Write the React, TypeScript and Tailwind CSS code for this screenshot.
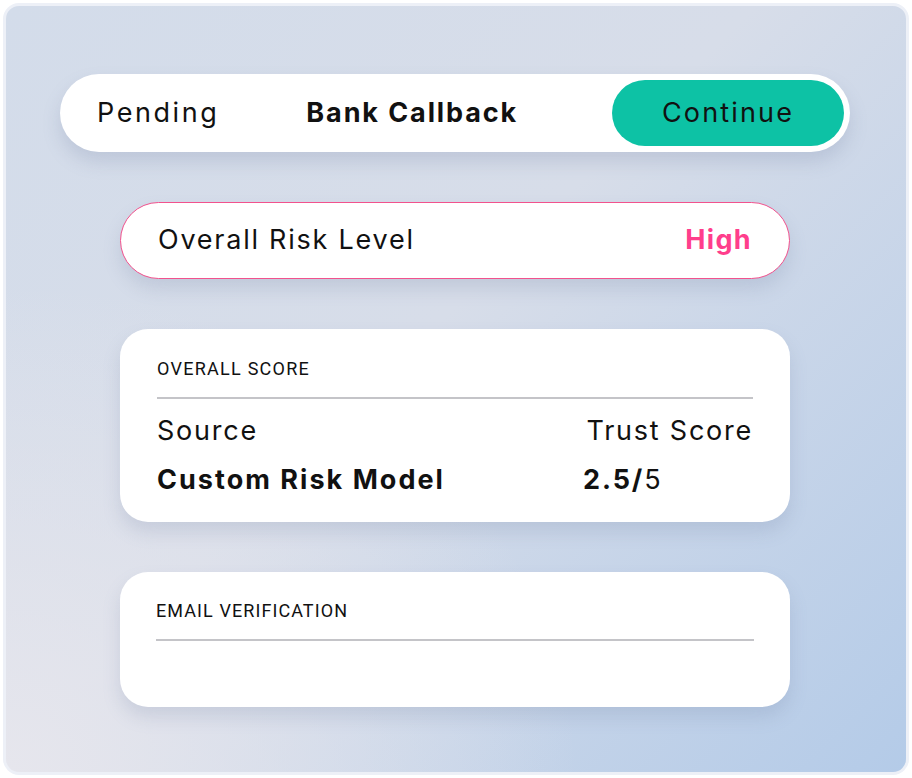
export default function App() {
  const sans = { fontFamily: 'Inter, "Noto Sans", sans-serif' };
  const label = { fontFamily: 'Roboto, "Noto Sans", sans-serif' };
  return (
    <div className="w-[912px] h-[778px] bg-white p-[3px]" style={sans}>
      <div className="h-full w-full rounded-[16px] border-[3px] border-[#edf0f7] bg-[radial-gradient(ellipse_at_bottom_left,#e6e6ed_0%,rgba(230,230,237,0)_45%),linear-gradient(135deg,#d3dcea_0%,#d7dde9_45%,#b4cbe8_100%)] pt-[68px] text-[#111] tracking-[0.11em]">
        {/* status pill */}
        <div className="ml-[54px] flex h-[78px] w-[790px] items-center rounded-full bg-white pr-[6px] pl-[37px] shadow-[0_10px_18px_rgba(110,125,160,0.22)]">
          <span className="text-[27px] tracking-[0.095em]">Pending</span>
          <span className="ml-[87px] text-[27px] font-bold tracking-[0.07em]">Bank Callback</span>
          <button className="ml-auto flex h-[66px] w-[232px] items-center justify-center rounded-full bg-[#0dc2a5] text-[27px] tracking-[0.08em]">
            Continue
          </button>
        </div>

        <div className="ml-[114px] mt-[50px] flex w-[670px] flex-col gap-[50px]">
          {/* risk level */}
          <div className="flex h-[77px] items-center justify-between rounded-full border-[1.5px] border-[#f2528d] bg-white px-[37px] shadow-[0_10px_18px_rgba(110,125,160,0.2)]">
            <span className="text-[27px]">Overall Risk Level</span>
            <span className="text-[27px] font-bold text-[#ff3e8c] tracking-[0.05em]">High</span>
          </div>

          {/* overall score */}
          <div className="h-[193px] rounded-[28px] bg-white px-[37px] pt-[28px] shadow-[0_10px_18px_rgba(110,125,160,0.2)]">
            <div className="text-[18px] leading-[24px] tracking-[0.07em]" style={label}>OVERALL SCORE</div>
            <div className="mt-[16px] h-[2px] bg-[#c4c4c8]" />
            <div className="mt-[16px] grid grid-cols-[426px_1fr] gap-y-[17px] text-[27px] leading-[32px]">
              <span>Source</span>
              <span className="text-right">Trust Score</span>
              <span className="font-bold tracking-[0.075em]">Custom Risk Model</span>
              <span><b className="tracking-[0.07em]">2.5/</b>5</span>
            </div>
          </div>

          {/* email verification */}
          <div className="h-[135px] rounded-[28px] bg-white px-[36px] pt-[27px] shadow-[0_10px_18px_rgba(110,125,160,0.2)]">
            <div className="text-[18px] leading-[24px] tracking-[0.06em]" style={label}>EMAIL VERIFICATION</div>
            <div className="mt-[16px] h-[2px] bg-[#c4c4c8]" />
          </div>
        </div>
      </div>
    </div>
  );
}
